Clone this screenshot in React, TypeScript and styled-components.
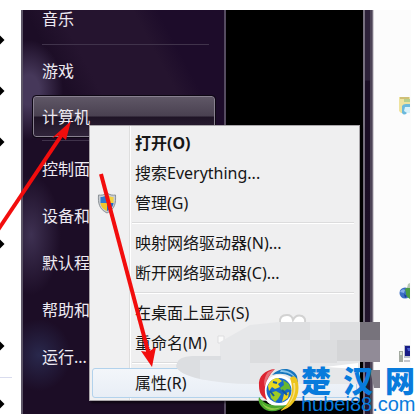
import React from "react";
import styled, { createGlobalStyle, css } from "styled-components";

const Global = createGlobalStyle`
  * { box-sizing: border-box; }
  body { margin: 0; background: #fff; overflow: hidden; }
  body, button, a { font-family: "Noto Sans", "Noto Sans CJK SC", sans-serif; font-size: 16px; }
`;

const Page = styled.div`
  position: relative;
  display: flex;
  height: 100vh;
  overflow: hidden;
`;

const Margin = styled.ul`
  width: 21px;
  margin: 0;
  padding: 14px 0 0;
  list-style: none;
`;

const Tick = styled.li<{ $marked: boolean }>`
  height: 51px;
  display: flex;
  align-items: center;
  svg { display: block; visibility: ${(p) => (p.$marked ? "visible" : "hidden")}; }
`;

const MarginRule = styled.li`
  width: 12px;
  height: 7px;
  border-bottom: 1px solid #d9dcee;
`;

const Screen = styled.main`
  flex: 1;
  display: flex;
  margin: 10px 6px 0 0;
  overflow: hidden;
`;

const StartMenu = styled.nav`
  width: 205px;
  padding: 0 9px 0 10px;
  border-left: 2px solid #5d5668;
  border-right: 2px solid #554b60;
  background:
    radial-gradient(ellipse 34px 50px at 6px 80px, #46385a 30%, transparent),
    radial-gradient(ellipse 30px 60px at 8px 225px, #3e3152, transparent),
    radial-gradient(ellipse 32px 36px at 16px 345px, #29284c, transparent),
    linear-gradient(62deg, #1c0d26 0 52%, #25142f 60% 78%, #1d0c2a 84%);
`;

const StartItem = styled.button<{ $first?: boolean; $active?: boolean }>`
  display: flex;
  align-items: center;
  width: 100%;
  height: 47px;
  padding: 0 9px;
  border: 0;
  background: none;
  color: #eeeaf2;
  line-height: 18px;
  text-align: left;
  ${(p) => p.$first && css`
    height: 32px;
    align-items: flex-start;
  `}
  ${(p) => p.$active && css`
    height: 41px;
    margin: 2px 0 3px;
    padding: 0 8px;
    border: 1px solid #88808f;
    border-radius: 3px;
    outline: 1px solid #0e0714;
    background: linear-gradient(#5f5766, #4a4151 48%, #1f1426 52%, #30243a);
  `}
`;

const StartRule = styled.hr`
  height: 1px;
  margin: 2px 6px 2px 9px;
  border: 0;
  background: #40334b;
`;

const Places = styled.div`
  padding-top: 2px;
`;

const Desktop = styled.div`
  flex: 1;
  background: #000;
`;

const Frame = styled.div`
  width: 10px;
  border: solid #77707f;
  border-width: 0 1px 0 2px;
  box-shadow: inset -2px 0 #4d4457;
  background: linear-gradient(#2d2139 0 70px, #1a0d24 71px 150px, #25182f);
`;

const Explorer = styled.aside`
  width: 38px;
  padding-right: 1px;
  border-left: 1px solid #d4d1d6;
  background: #fcfcfc;
  display: flex;
  flex-direction: column;
  align-items: flex-end;
  overflow: hidden;
  svg { display: block; flex: none; }
`;

const Gap = styled.div<{ $size: number }>`
  flex: 0 0 ${(p) => p.$size}px;
`;

const ContextMenu = styled.div`
  position: absolute;
  left: 89px;
  top: 125px;
  width: 271px;
  padding: 2px;
  border: 1px solid #aaa7ab;
  box-shadow: 2px 2px 2px #0008;
  background: linear-gradient(90deg, #f0f0f1 39px, #dedede 39px 40px, #fff 40px 41px, #efeff0 41px);
`;

const MenuItem = styled.button<{ $strong?: boolean; $hot?: boolean }>`
  display: flex;
  align-items: center;
  width: 100%;
  height: 30px;
  padding: 0 2px 0 4px;
  border: 1px solid transparent;
  border-radius: 3px;
  background: none;
  color: #161616;
  font-weight: ${(p) => (p.$strong ? 700 : 400)};
  line-height: 20px;
  text-align: left;
  white-space: nowrap;
  ${(p) => p.$hot && css`
    border-color: #b2d2ec;
    background: linear-gradient(#f3f6fa, #e8eef6);
  `}
`;

const IconCell = styled.span`
  width: 38px;
  flex: none;
  svg { display: block; }
`;

const MenuRule = styled.hr`
  height: 2px;
  margin: 4px 3px 4px 40px;
  border: 0;
  border-top: 1px solid #dcdcdd;
  border-bottom: 1px solid #fff;
`;

const Overlay = styled.svg`
  position: absolute;
  left: 0;
  top: 0;
  pointer-events: none;
`;

const Watermark = styled.a`
  position: absolute;
  right: 2px;
  bottom: 0;
  display: flex;
  align-items: flex-end;
  gap: 1px;
  color: #087bdc;
  text-decoration: none;
  svg { display: block; margin-bottom: 2px; }
`;

const Brand = styled.span`
  display: flex;
  flex-direction: column;
  width: 114px;
`;

const BrandName = styled.strong`
  display: flex;
  justify-content: space-between;
  font-family: "Noto Sans CJK SC", sans-serif;
  font-size: 30px;
  font-weight: 900;
  line-height: 30px;
`;

const BrandUrl = styled.span`
  font-family: "Liberation Sans", Arial, sans-serif;
  font-size: 20px;
  line-height: 20px;
  white-space: nowrap;
`;

const Diamond = () => (
  <svg width="5" height="10" viewBox="0 0 5 10" aria-hidden="true">
    <path d="M0 0.5 L4.500 5 L0 9.500Z" fill="#000" />
  </svg>
);

const Shield = () => (
  <svg width="20" height="22" viewBox="0 0 20 22" aria-hidden="true">
    <path d="M10 1C7.500 3 4 3.500 1.500 3C1 11 2 17 10 21C18 17 19 11 18.500 3C16 3.500 12.500 3 10 1Z" fill="#c8cdd3" stroke="#8b9196" />
    <path d="M10 3C8 4.500 5.500 5 3.500 5V11H10Z" fill="#2f77cf" />
    <path d="M10 3C12 4.500 14.500 5 16.500 5V11H10Z" fill="#f5d23d" />
    <path d="M3.500 11H10V19C5.500 17 3.800 14 3.500 11Z" fill="#f2c62d" />
    <path d="M16.500 11H10V19C14.500 17 16.200 14 16.500 11Z" fill="#276bc4" />
  </svg>
);

const FolderIcon = () => (
  <svg width="11" height="20" viewBox="0 0 11 20" aria-hidden="true">
    <path d="M0 1H11V17H2L0 15Z" fill="#eee3a0" />
    <path d="M1 1H10V3H1Z" fill="#cfc077" />
    <path d="M5 3H11V6H5Z" fill="#b5cf90" />
    <path d="M3 10Q4 8 7 8H11V11H8V17Q5 20 3 17Z" fill="#6bb9dc" />
    <path d="M6 11H11V17H8L5 15Z" fill="#d9f2fb" />
  </svg>
);

const GlobeIcon = () => (
  <svg width="11" height="18" viewBox="0 0 11 18" aria-hidden="true">
    <circle cx="6" cy="10" r="5.500" fill="#3c6fc4" />
    <path d="M1 9Q3 5 6 7L5 10Z" fill="#85aee8" />
    <path d="M6 6L11 3V16Q6 13 7 10Z" fill="#4a9d43" />
    <path d="M9 1L11 0V5H8Z" fill="#b8c9b5" />
    <path d="M5 11L8 13L6 15Z" fill="#1b3d9b" />
  </svg>
);

const ComputerIcon = () => (
  <svg width="11" height="20" viewBox="0 0 11 20" aria-hidden="true">
    <path d="M5 1H11V14H5Z" fill="#bbc1cc" />
    <path d="M6 2H11V12H6Z" fill="#171b86" />
    <path d="M8 4H11V7H9Z" fill="#475dd0" />
    <path d="M0 7H4V18H0Z" fill="#a3aaa0" />
    <path d="M1 8H3V11H1Z" fill="#d8e3cf" />
    <path d="M5 16H11V18H5Z" fill="#c5c7cc" />
  </svg>
);

const Emblem = () => (
  <svg width="42" height="43" viewBox="0 0 42 43" aria-hidden="true">
    <circle cx="21" cy="22" r="16" fill="#fff" />
    <circle cx="21" cy="21.500" r="12.500" fill="#1769c9" />
    <path d="M10 17Q13 9 20 9L24 12L20 15L22 18L17 20L14 18L11 22Z" fill="#e8d91f" />
    <path d="M25 11L31 15L33 21L29 20L25 23L22 19L26 16Z" fill="#68b72e" />
    <path d="M12 24L18 22L23 25L20 30L17 33L13 29Z" fill="#9dcc24" />
    <path d="M26 25L31 23L30 29L24 33Z" fill="#f0d51c" />
    <path d="M15 13L19 14M24 21L29 26M12 22L16 27" stroke="#135a9f" strokeWidth="2" />
    <path d="M17 0C7 1 0 7 1 17C1 25 5 29 9 31C5 22 6 11 17 0Z" fill="#dc2430" />
    <path d="M17 0C11 5 8 11 7 18C5 13 7 7 10 3Z" fill="#fff" opacity=".35" />
    <path d="M14 6C22-2 34-2 39 7L40 14C33 5 24 3 14 6Z" fill="#1676be" />
    <path d="M23 1C31 1 35 5 38 9C33 5 29 3 22 3Z" fill="#8bc5eb" />
    <path d="M39 10C44 25 36 39 22 42C32 34 37 23 32 9Q36 5 39 10Z" fill="#edc51c" />
    <path d="M37 14C39 25 34 33 28 38C35 30 37 22 35 14Z" fill="#fff" opacity=".45" />
    <path d="M1 28C6 35 14 38 29 36C21 43 10 45 4 38C1 35 0 32 1 28Z" fill="#4aa72d" />
    <path d="M4 34C10 40 18 40 24 38C16 43 8 42 4 34Z" fill="#b9df57" opacity=".65" />
  </svg>
);

const ticks = [true, true, true, false, true, false, true];

const places = ["控制面板", "设备和打印机", "默认程序", "帮助和支持", "运行..."];

const Haze = () => (
  <Overlay width="417" height="414" viewBox="0 0 417 414" aria-hidden="true">
    <path d="M280 323Q279 315 287 315Q292 315 293 320Q296 314 302 316Q306 318 305 323" fill="#fff" stroke="#d2d2d2" strokeWidth="2" />
    <path d="M218 336H224V343H218Z" fill="#fafafa" stroke="#dddddf" />
    <path d="M220 342L250 325L279 322H360V384H250L220 378Z" fill="#e6e7e9" />
    <path d="M177 363Q178 357 192 356L221 356V381L200 379Q178 374 176 366Z" fill="#dcdee1" />
    <path d="M200 360H250V384Q225 384 200 379Z" fill="#e3e6ea" />
    <path d="M250 340H280V363H250ZM310 340H337V363H310Z" fill="#dcdddf" />
    <path d="M280 322H310V340H280ZM330 322H360V340H330Z" fill="#dedfe1" />
    <path d="M337 340H360V361H337Z" fill="#d4d5d7" />
    <path d="M360 322H380V340H360Z" fill="#77737c" />
    <path d="M360 340H380V362H360Z" fill="#918b97" />
    <path d="M370 370H380V388H374Z" fill="#84808a" />
    <path d="M325 367L358 363V369Z" fill="#fff" />
  </Overlay>
);

const Arrows = () => (
  <Overlay width="417" height="414" viewBox="0 0 417 414" aria-hidden="true">
    <g stroke="#f20d0d" strokeWidth="4">
      <path d="M-2 230L63 133" />
      <path d="M101 174L149 355" />
    </g>
    <path d="M71 121L66 140L60 135L52 138Z" fill="#f20d0d" />
    <path d="M152 367L141 351L148 352L156 347Z" fill="#f20d0d" />
  </Overlay>
);

export default function App() {
  return (
    <>
      <Global />
      <Page>
        <Margin>
          {ticks.map((marked, i) => (
            <Tick key={i} $marked={marked}><Diamond /></Tick>
          ))}
          <MarginRule />
          <Tick $marked><Diamond /></Tick>
        </Margin>
        <Screen>
          <StartMenu>
            <StartItem $first>音乐</StartItem>
            <StartRule />
            <StartItem>游戏</StartItem>
            <StartItem $active>计算机</StartItem>
            <StartRule />
            <Places>
              {places.map((name) => <StartItem key={name}>{name}</StartItem>)}
            </Places>
          </StartMenu>
          <Desktop />
          <Frame />
          <Explorer>
            <Gap $size={86} />
            <FolderIcon />
            <Gap $size={167} />
            <GlobeIcon />
            <Gap $size={43} />
            <ComputerIcon />
          </Explorer>
        </Screen>
        <ContextMenu role="menu">
          <MenuItem role="menuitem" $strong><IconCell />打开(O)</MenuItem>
          <MenuItem role="menuitem"><IconCell />搜索Everything...</MenuItem>
          <MenuItem role="menuitem"><IconCell><Shield /></IconCell>管理(G)</MenuItem>
          <MenuRule />
          <MenuItem role="menuitem"><IconCell />映射网络驱动器(N)...</MenuItem>
          <MenuItem role="menuitem"><IconCell />断开网络驱动器(C)...</MenuItem>
          <MenuRule />
          <MenuItem role="menuitem"><IconCell />在桌面上显示(S)</MenuItem>
          <MenuItem role="menuitem"><IconCell />重命名(M)</MenuItem>
          <MenuRule />
          <MenuItem role="menuitem" $hot><IconCell />属性(R)</MenuItem>
        </ContextMenu>
        <Haze />
        <Arrows />
        <Watermark href="#hubei88">
          <Emblem />
          <Brand>
            <BrandName><span>楚</span><span>汉</span><span>网</span></BrandName>
            <BrandUrl>hubei88.com</BrandUrl>
          </Brand>
        </Watermark>
      </Page>
    </>
  );
}
